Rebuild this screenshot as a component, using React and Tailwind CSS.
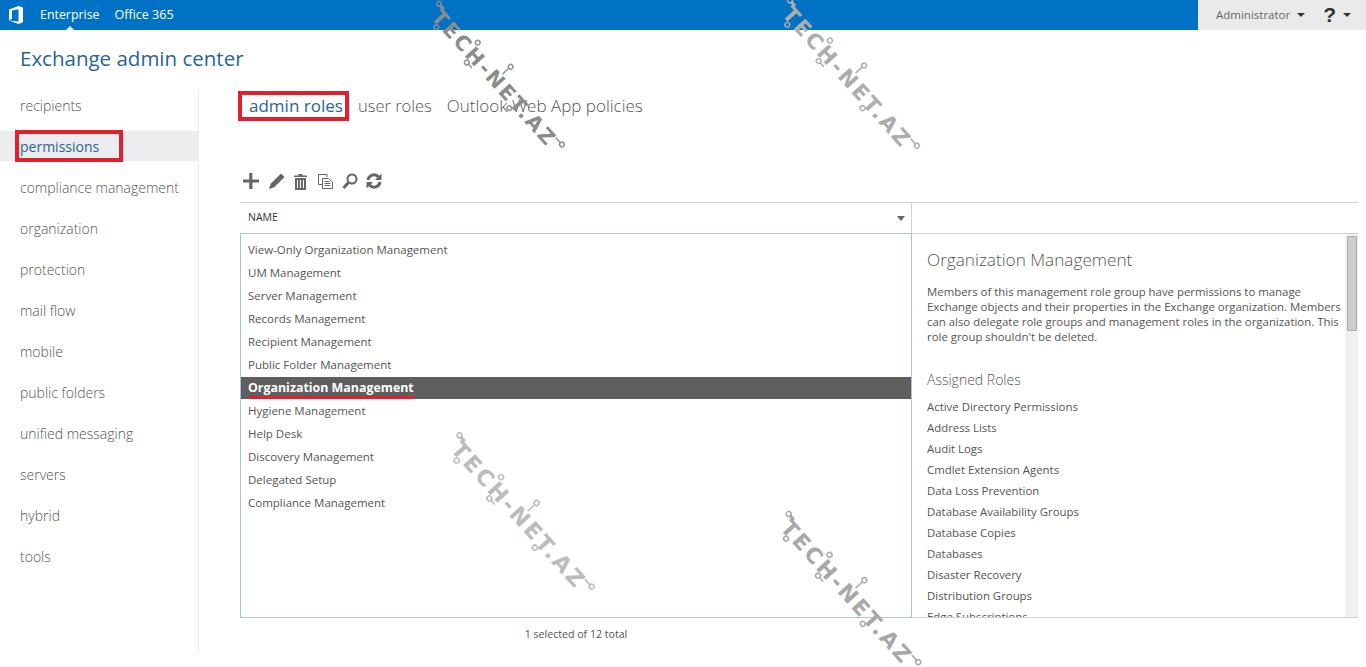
import React from 'react';

const navItems = ['recipients', 'permissions', 'compliance management', 'organization', 'protection', 'mail flow', 'mobile', 'public folders', 'unified messaging', 'servers', 'hybrid', 'tools'];
const roleGroups = ['View-Only Organization Management', 'UM Management', 'Server Management', 'Records Management', 'Recipient Management', 'Public Folder Management', 'Organization Management', 'Hygiene Management', 'Help Desk', 'Discovery Management', 'Delegated Setup', 'Compliance Management'];
const assignedRoles = ['Active Directory Permissions', 'Address Lists', 'Audit Logs', 'Cmdlet Extension Agents', 'Data Loss Prevention', 'Database Availability Groups', 'Database Copies', 'Databases', 'Disaster Recovery', 'Distribution Groups', 'Edge Subscriptions'];

function OfficeLogo() {
  return (
    <svg width="16" height="18" viewBox="0 0 16 18" fill="#fff">
      <path d="M1 3.5 10.5 0 15 1.5v14.8L10.5 18 1 14.6 10.5 15.6V3.2L4 4.6v8.2L1 14.6z" />
    </svg>
  );
}

function Toolbar() {
  return (
    <div className="mt-[50px] flex h-[20px] items-center gap-[9px] pl-[3px] text-[#666]">
      <svg width="16" height="16" viewBox="0 0 16 16" fill="currentColor"><path d="M6.2 0h3.2v6.4H16v3.2H9.4V16H6.2V9.6H0V6.4h6.2z" /></svg>
      <svg width="18" height="18" viewBox="0 0 18 18" fill="currentColor"><path d="M13 1.5 16.5 5 6.2 15.3 1 17l1.7-5.2z" /></svg>
      <svg width="13" height="16" viewBox="0 0 13 16" fill="currentColor" className="-ml-[1px] mt-[2px]"><path d="M4.500 0h4v1.500h4.500V3H0V1.500h4.500zM1 4h11v12H1zM3 6v8h1V6zm3 0v8h1V6zm3 0v8h1V6z" fillRule="evenodd" /></svg>
      <svg width="15" height="15" viewBox="0 0 15 15" fill="none" stroke="currentColor" className="ml-[2px]"><path d="M9 3V.5H.5v10H4" /><path d="M4.500 4.500h6l4 3.500v6.500h-10z" fill="#fff" /><path d="M6.500 7.500h5M6.500 9.500h6M6.500 11.500h6" /></svg>
      <svg width="16" height="17" viewBox="0 0 16 17" fill="none" stroke="currentColor"><circle cx="10" cy="6" r="4.500" strokeWidth="2" /><path d="M6.500 9.500 1.500 15" strokeWidth="3" /></svg>
      <svg width="16" height="16" viewBox="0 0 16 16" fill="none" stroke="currentColor" strokeWidth="3" className="-ml-[1px]"><path d="M2 7a6 6 0 0 1 10.500-3" /><path d="M14 9a6 6 0 0 1-10.500 3" /><path d="M15.500.5v6.500h-6.500z" fill="currentColor" stroke="none" /><path d="M.5 15.500V9h6.500z" fill="currentColor" stroke="none" /></svg>
    </div>
  );
}

function Watermark({ className, tone }) {
  return (
    <svg width="208" height="40" viewBox="0 0 208 40" fill="none" stroke="currentColor" strokeWidth="1.500" className={`pointer-events-none absolute rotate-[48deg] ${className} ${tone}`}>
      <circle cx="3" cy="16" r="2.500" />
      <path d="M5 16h6" strokeWidth="3" />
      <circle cx="20" cy="35" r="2.500" />
      <circle cx="62" cy="13" r="2.500" />
      <circle cx="70" cy="36" r="2.500" />
      <path d="M72 36h6" />
      <circle cx="105" cy="4" r="2.500" />
      <path d="M105 7v9" />
      <circle cx="137" cy="35" r="2.500" />
      <circle cx="204" cy="19" r="2.500" />
      <path d="M194 19h8" />
      <text x="8" y="33" textLength="186" lengthAdjust="spacing" stroke="none" fill="currentColor" className="font-['DejaVu_Sans',sans-serif] text-[22px] font-bold uppercase">Tech-Net.az</text>
    </svg>
  );
}

export default function App() {
  return (
    <div className="relative h-[667px] w-[1366px] overflow-hidden bg-white font-['Open_Sans',sans-serif] text-[#555]">
      <header className="flex h-[30px] bg-[#0072c6] text-white">
        <div className="flex w-[40px] items-center pl-[8px]"><OfficeLogo /></div>
        <div className="relative text-[12.400px] leading-[30px]">
          Enterprise
          <span className="absolute bottom-0 left-[26px] h-0 w-0 border-x-[4px] border-b-[4px] border-x-transparent border-b-white" />
        </div>
        <div className="ml-[15px] text-[12.500px] leading-[30px]">Office 365</div>
        <div className="ml-auto flex w-[168px] items-center bg-[#eaeaea] pl-[18px] text-[#666]">
          <span className="text-[11.500px]">Administrator</span>
          <span className="ml-[7px] h-0 w-0 border-x-[4px] border-t-[4px] border-x-transparent border-t-[#333]" />
          <span className="ml-[18px] font-['Liberation_Sans',sans-serif] text-[21px] font-bold text-[#333]">?</span>
          <span className="ml-[7px] h-0 w-0 border-x-[4px] border-t-[4px] border-x-transparent border-t-[#333]" />
        </div>
      </header>

      <div className="flex h-[60px] items-center pb-[3px] pl-[20px] text-[20.500px] text-[#2a6496]">Exchange admin center</div>

      <div className="flex">
        <aside className="flex h-[562px] w-[199px] flex-col gap-[11px] border-r border-[#ebebeb]">
          {navItems.map((item) =>
            item === 'permissions' ? (
              <div key={item} className="flex h-[30px] items-center bg-[#ebecee]">
                <span className="ml-[15px] flex h-[32px] w-[108px] items-center border-[4px] border-[#e21f2e] pl-[1px] text-[14px] text-[#2a6496]">{item}</span>
              </div>
            ) : (
              <div key={item} className="flex h-[30px] items-center pl-[20px] text-[14px] font-light text-[#555]">{item}</div>
            )
          )}
        </aside>

        <main className="box-content w-[1118px] pl-[41px]">
          <div className="mt-[1px] flex h-[30px] items-center text-[17px] font-light text-[#555]">
            <span className="-ml-[2px] flex h-[30px] w-[111px] items-center border-[4px] border-[#e21f2e] pl-[7px] font-normal text-[#2a6496]">admin roles</span>
            <span className="ml-[9px] text-[16.500px]">user roles</span>
            <span className="ml-[15px]">Outlook Web App policies</span>
          </div>

          <Toolbar />

          <div className="mt-[11px] w-[1118px] border-t border-[#d0d0d0]">
            <div className="flex h-[30px]">
              <div className="flex w-[671px] items-center justify-between pl-[8px] pr-[6px]">
                <span className="text-[10.500px] text-[#333]">NAME</span>
                <span className="h-0 w-0 border-x-[4px] border-t-[5px] border-x-transparent border-t-[#666]" />
              </div>
              <div className="border-l border-[#d0d0d0]" />
            </div>
            <div className="flex h-[385px]">
              <div className="w-[672px] shrink-0 border border-[#a3c3e5] pt-[4px]">
                {roleGroups.map((role) =>
                  role === 'Organization Management' ? (
                    <div key={role} className="relative mt-[1px] flex h-[22px] items-center bg-[#5f5f5f] pl-[7px] text-[12.400px] font-bold text-white">
                      {role}
                      <span className="absolute bottom-0 left-[7px] h-[3px] w-[166px] rounded-full bg-[#e21f2e]" />
                    </div>
                  ) : (
                    <div key={role} className="flex h-[23px] items-center pl-[7px] text-[11.500px]">{role}</div>
                  )
                )}
              </div>
              <div className="flex min-w-0 flex-1 border-y border-[#d0d0d0]">
                <div className="h-full min-w-0 flex-1 overflow-hidden pl-[15px] pr-[2px] pt-[13px]">
                  <h2 className="text-[17.200px] font-light leading-[26px] text-[#555]">Organization Management</h2>
                  <p className="mt-[11px] text-[11.400px] leading-[15px]">Members of this management role group have permissions to manage Exchange objects and their properties in the Exchange organization. Members can also delegate role groups and management roles in the organization. This role group shouldn't be deleted.</p>
                  <h3 className="mt-[24px] text-[14px] font-light leading-[24px] text-[#555]">Assigned Roles</h3>
                  <ul className="mt-[4px]">
                    {assignedRoles.map((role) => (
                      <li key={role} className="h-[21px] text-[11.400px] leading-[21px]">{role}</li>
                    ))}
                  </ul>
                </div>
                <div className="w-[13px] shrink-0 bg-[#f0f0f0] pl-[2px] pr-[1px] pt-[2px]">
                  <div className="h-[95px] rounded-[1px] border border-[#ababab] bg-[#cdcdcd]" />
                </div>
              </div>
            </div>
          </div>
          <div className="mt-[9px] w-[672px] text-center text-[10.600px]">1 selected of 12 total</div>
        </main>
      </div>

      <Watermark className="left-[395px] top-[56px] scale-[0.93]" tone="text-[#8c8c8c]" />
      <Watermark className="left-[748px] top-[55px] scale-[0.96]" tone="text-[#adadad]" />
      <Watermark className="left-[420px] top-[493px]" tone="text-[#bcbcbc]" />
      <Watermark className="left-[748px] top-[570px] scale-[0.98]" tone="text-[#a8a8a8]" />
    </div>
  );
}
